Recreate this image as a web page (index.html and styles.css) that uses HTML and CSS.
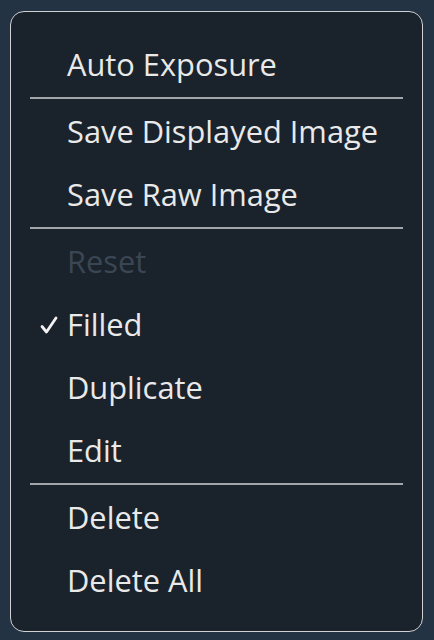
FILE: index.html
```html
<!DOCTYPE html>
<html>
<head>
<meta charset="utf-8">
<link rel="stylesheet" href="styles.css">
</head>
<body>
<div class="menu">
  <div class="item"><span class="mark"></span><span class="label">Auto Exposure</span></div>
  <div class="sep"></div>
  <div class="item"><span class="mark"></span><span class="label">Save Displayed Image</span></div>
  <div class="item"><span class="mark"></span><span class="label">Save Raw Image</span></div>
  <div class="sep"></div>
  <div class="item disabled"><span class="mark"></span><span class="label">Reset</span></div>
  <div class="item"><span class="mark"><svg width="18" height="18" viewBox="0 0 18 18"><path d="M2 10.5 L6.5 16 L16 2" fill="none" stroke="#f2f2f2" stroke-width="2.8" stroke-linecap="round" stroke-linejoin="round"/></svg></span><span class="label">Filled</span></div>
  <div class="item"><span class="mark"></span><span class="label">Duplicate</span></div>
  <div class="item"><span class="mark"></span><span class="label">Edit</span></div>
  <div class="sep"></div>
  <div class="item"><span class="mark"></span><span class="label">Delete</span></div>
  <div class="item"><span class="mark"></span><span class="label">Delete All</span></div>
</div>
</body>
</html>
```
FILE: styles.css
```css
html, body {
  margin: 0;
  padding: 0;
  background: #243344;
  height: 100%;
}
body {
  padding: 11px 0 0 10px;
  box-sizing: border-box;
  font-family: "Open Sans", "Noto Sans", sans-serif;
}
.menu {
  width: 413px;
  box-sizing: border-box;
  background: #1a222b;
  border: 1.5px solid #cfd1d3;
  border-radius: 14px;
  padding: 21px 0 19px 0;
  display: flex;
  flex-direction: column;
}
.item {
  height: 63px;
  display: flex;
  align-items: center;
  padding-left: 29px;
  color: #e9e9e9;
  font-size: 30.8px;
}
.mark {
  width: 27px;
  display: flex;
  align-items: center;
}
.mark svg {
  display: block;
}
.label {
  line-height: 1;
}
.item.disabled {
  color: #3a4653;
}
.sep {
  height: 2px;
  background: #a3a6a8;
  margin: 1px 19px 1px 19px;
}
```
